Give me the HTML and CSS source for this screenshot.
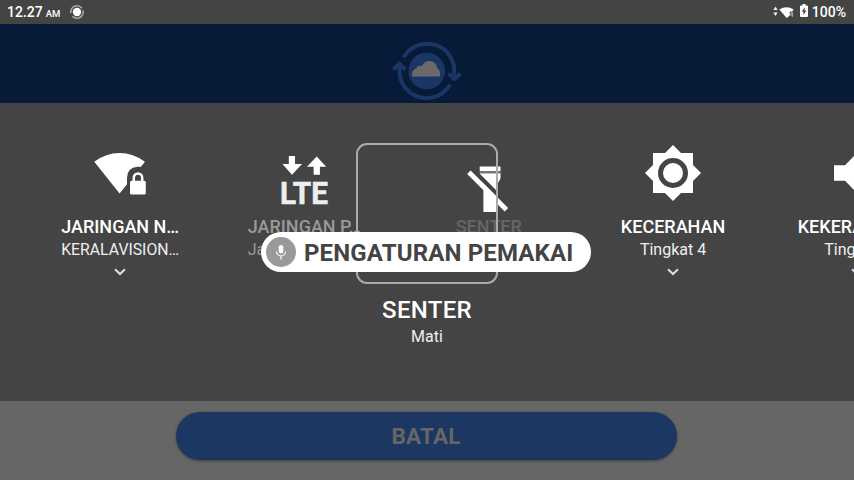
FILE: index.html
```html
<!DOCTYPE html>
<html lang="id">
<head>
<meta charset="utf-8">
<title>Pengaturan Pemakai</title>
<link rel="stylesheet" href="styles.css">
</head>
<body>
<div class="screen">
  <header class="status">
    <span class="clock">12.27<small>AM</small></span>
    <svg class="sync" width="16" height="16" viewBox="0 0 16 16"><circle cx="8" cy="8" r="6.200" fill="none" stroke="#aaa" stroke-width="1.500" stroke-dasharray="16 3.480" transform="rotate(-15 8 8)"/><circle cx="8" cy="8" r="4.200" fill="#fff"/></svg>
    <span class="spacer"></span>
    <svg class="net" width="22" height="16" viewBox="0 0 22 16"><path d="M.3 6 2.500 2.500 4.700 6zM.3 8.500h4.400L2.500 12z" fill="#eee"/><path d="M6.300 5.400Q13.500 1 20.700 5.400L19 7.500H16.800V11.400L13.700 14z" fill="#fff"/><path d="m19.300 7.500-2 3.500h3M19.300 8v5" fill="none" stroke="#aaa" stroke-width="1"/></svg>
    <svg class="battery" width="8" height="14" viewBox="0 0 8 14"><path d="M2.500 0h3v1.500H7q1 0 1 1V12q0 1-1 1H1q-1 0-1-1V2.500q0-1 1-1h1.500z" fill="#fff"/><path d="M4.700 3.300 1.800 7.700h1.700v3.500l2.800-4.700H4.700z" fill="#444"/></svg>
    <span class="percent">100%</span>
  </header>

  <div class="brand">
    <svg width="76" height="64" viewBox="389 39 76 64">
      <g fill="none" stroke="#1b3664" stroke-width="4">
        <path d="M403.800 57.500A27 27 0 0 1 454 75v3"/>
        <path d="M450 84.500A27 27 0 0 1 399.500 71V64"/>
        <path d="m448.500 73.500 5.900 5.500 6-5.500M393.500 69.500l5.900-6 5.900 6"/>
      </g>
      <circle cx="426.700" cy="71" r="18.300" fill="#1b3664"/>
      <path d="M412 76.500V74q0-4.500 4.500-5.500 1-3.500 5.500-2.500 2-5 7.500-5 6.500 0 7.700 7 2.800 1.500 2.800 5v3.500z" fill="#6a6a6a"/>
    </svg>
  </div>

  <main class="panel">
    <div class="tiles">
      <section class="tile">
        <svg class="icon" viewBox="0 0 64 64" fill="#fff"><path d="M6.300 20.700Q18 12 31.600 12t25.300 8.700L53 25.700h-3.500Q39 26.500 39 37v6.300L31.600 52.500z"/><rect x="42" y="39.700" width="15.800" height="13.800" rx="1.600"/><path d="M45.800 41v-4.300a4.200 4.200 0 0 1 8.400 0V41" fill="none" stroke="#fff" stroke-width="2.500"/></svg>
        <h2>JARINGAN N…</h2><p class="network">KERALAVISION…</p>
        <svg class="chev" viewBox="0 0 14 10"><path d="m2 2.200 5 4.800 5-4.800"/></svg>
      </section>
      <section class="tile dim">
        <svg class="icon" viewBox="0 0 64 64" fill="#fff"><path d="M16.800 15h6.200v8h7L20 33.700 10.400 23h6.400zM44.700 15.500 54.200 25.700h-6.300v8h-6.300v-8H35z"/><text x="8" y="62.500" textLength="48" lengthAdjust="spacingAndGlyphs" class="lte">LTE</text></svg>
        <h2>JARINGAN P…</h2><p>Jaringan seluler</p>
      </section>
      <section class="tile faint">
        <svg class="icon" viewBox="0 0 64 64" fill="#fff"><path d="M22.700 25.400h20.800v4.800H22.700zM22.700 32.300h20.800v5.200l-3.300 6V71H26.400V43.500l-3.700-6z"/><path d="M22.700 31.200h20.800" stroke="#777" stroke-width="2"/><path d="m20.500 33.500 30 30" stroke="#444" stroke-width="4.200"/><path d="m11.900 31.300 37.500 37.500" stroke="#fff" stroke-width="4.800"/></svg>
        <h2>SENTER</h2>
      </section>
      <section class="tile">
        <svg class="icon" viewBox="0 0 64 64" fill="#fff"><path d="M12 12h40v40H12z"/><path d="m32 4 28 28-28 28L4 32z"/><circle cx="32" cy="32" r="12.500" stroke="#444" stroke-width="5"/></svg>
        <h2>KECERAHAN</h2><p>Tingkat 4</p>
        <svg class="chev" viewBox="0 0 14 10"><path d="m2 2.200 5 4.800 5-4.800"/></svg>
      </section>
      <section class="tile">
        <svg class="icon" viewBox="0 0 64 64" fill="#fff"><path d="M9 24.300h11L35 9v46L20 39.700H9z"/></svg>
        <h2>KEKERASAN&nbsp;…</h2><p>Tingkat 4</p>
        <svg class="chev" viewBox="0 0 14 10"><path d="m2 2.200 5 4.800 5-4.800"/></svg>
      </section>
    </div>
    <div class="current">
      <h1>SENTER</h1>
      <p>Mati</p>
    </div>
    <div class="focus"></div>
    <div class="voice">
      <span class="mic"><svg width="16" height="18" viewBox="0 0 16 18"><rect x="5.700" y="2" width="4.600" height="8.500" rx="2.300" fill="#fff"/><path d="M3.500 8.500a4.500 4.500 0 0 0 9 0M8 13v3.500" fill="none" stroke="#fff" stroke-width="1.200"/></svg></span>
      <span class="command">PENGATURAN PEMAKAI</span>
    </div>
  </main>

  <footer class="footer"><button class="cancel">BATAL</button></footer>
</div>
</body>
</html>
```
FILE: styles.css
```css
* { box-sizing: border-box; margin: 0; }
body { font-family: Roboto, sans-serif; color: #fff; background: #444; }
.screen { width: 854px; height: 480px; display: flex; flex-direction: column; overflow: hidden; }
.status { height: 24px; padding: 0 8px 0 7px; display: flex; align-items: center; background: #444; font-size: 14px; font-weight: 500; }
.clock { width: 62px; white-space: nowrap; }
.clock small { font-size: 9.5px; margin-left: 3px; }
.spacer { flex: 1; }
.battery { margin: 0 4px 3px 5px; }
.brand { height: 79px; padding-top: 15px; display: flex; justify-content: center; background: #071a38; }
.panel { height: 298px; position: relative; background: #444; }
.tiles { display: grid; grid-template-columns: repeat(5, 184.3px); padding: 38px 0 0 28px; height: 193px; overflow: hidden; }
.tile { display: flex; flex-direction: column; align-items: center; text-align: center; }
.icon { width: 64px; height: 64px; overflow: visible; }
.tile h2 { font-size: 18px; line-height: 22px; font-weight: 500; margin-top: 11px; white-space: nowrap; }
.tile p { font-size: 16px; line-height: 20px; margin-top: 2px; color: #eee; white-space: nowrap; }
.tile .network { font-size: 15.8px; }
.chev { width: 14px; height: 10px; margin-top: 7px; fill: none; stroke: #ddd; stroke-width: 2; }
.lte { font-size: 30.5px; font-weight: 700; fill: #eee; stroke: #eee; stroke-width: .5px; }
.tile.dim h2, .tile.dim p { color: #999; }
.tile.faint h2 { color: #666; }
.current { text-align: center; }
.current h1 { font-size: 24px; line-height: 28px; font-weight: 500; letter-spacing: .3px; }
.current p { font-size: 16px; line-height: 20px; margin-top: 3px; color: #eee; }
.focus { position: absolute; left: 356px; top: 40px; width: 142px; height: 141px; border: 2px solid #aaa; border-radius: 11px; }
.voice { position: absolute; left: 261px; top: 129px; width: 330px; height: 40px; padding-left: 5px; display: flex; align-items: center; gap: 8px; border-radius: 20px; background: #fff; }
.mic { width: 30px; height: 30px; display: grid; place-items: center; border-radius: 50%; background: #999; }
.command { font-size: 24px; line-height: 28px; padding-top: 1px; font-weight: 700; letter-spacing: .15px; color: #444; white-space: nowrap; }
.footer { height: 79px; padding: 11px 2px 0 0; display: flex; justify-content: center; align-items: flex-start; background: #666; }
.cancel { width: 501px; height: 48px; border: 0; border-radius: 24px; background: #1b3762; color: #666; font: 700 22.5px/48px Roboto, sans-serif; letter-spacing: .2px; padding: 0; box-shadow: 0 1px 3px #0006; }
```
